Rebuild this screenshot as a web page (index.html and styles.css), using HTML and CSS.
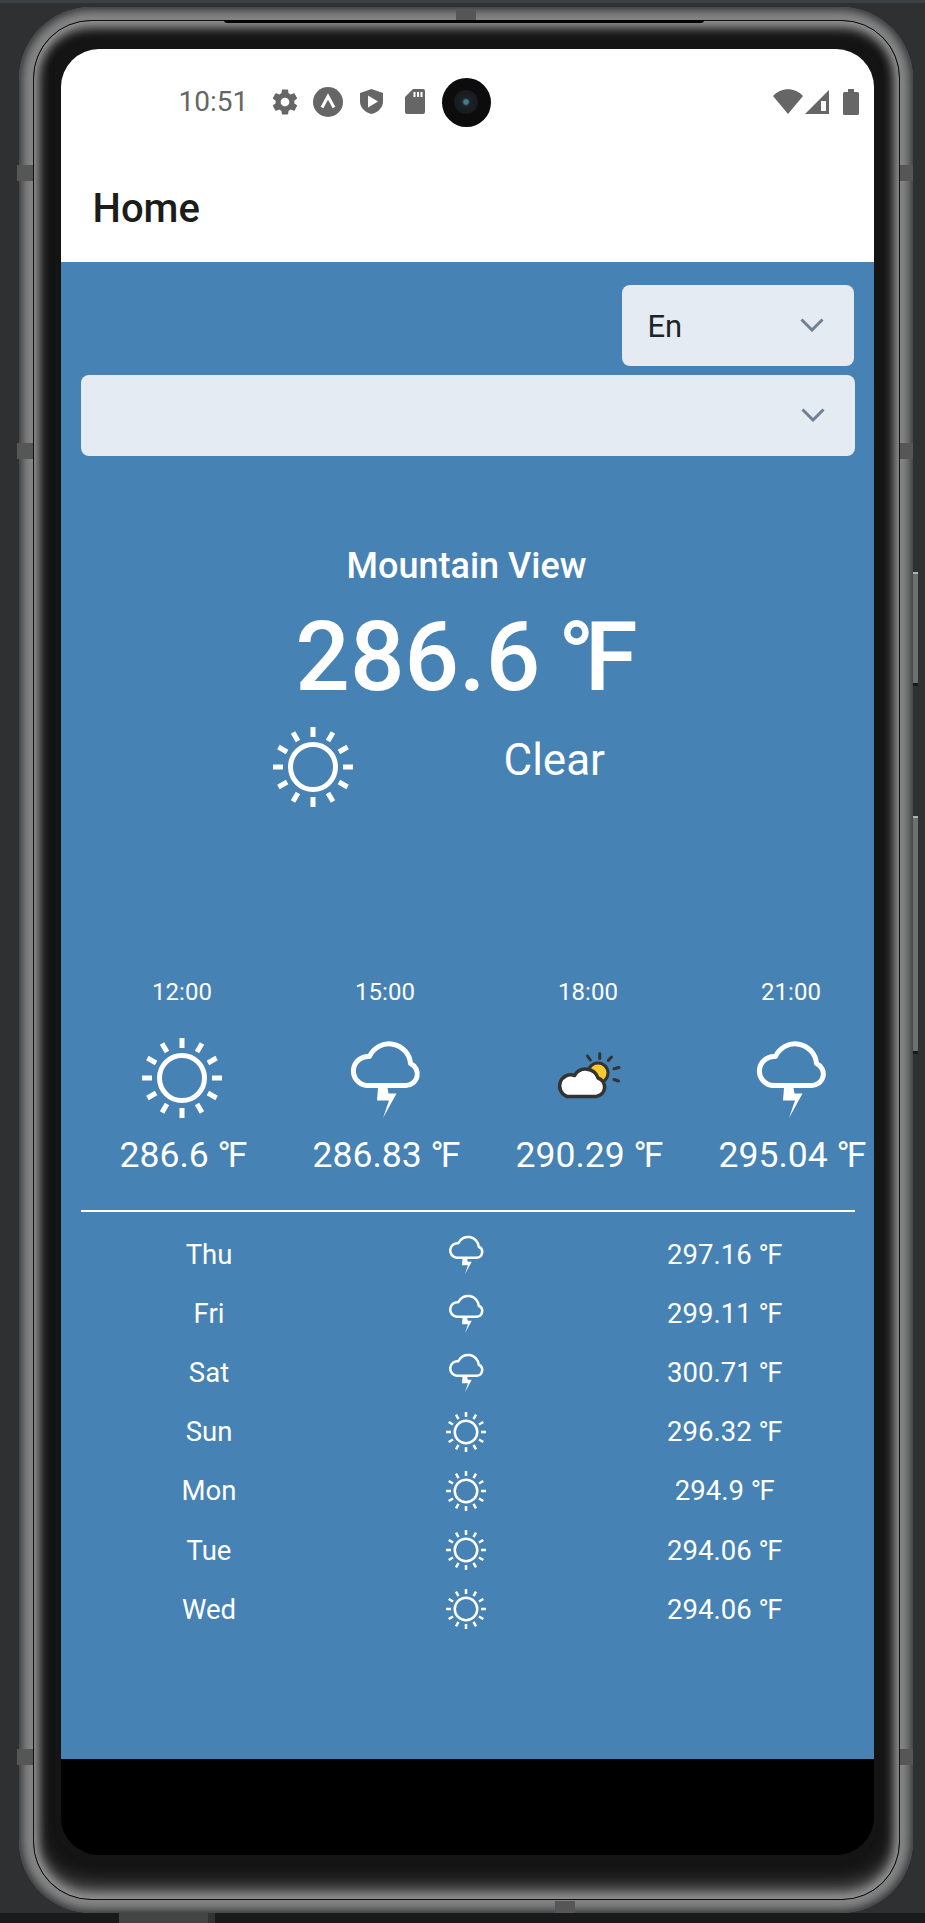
FILE: index.html
```html
<!DOCTYPE html>
<html lang="en">
<head>
<meta charset="utf-8">
<title>Home</title>
<link rel="stylesheet" href="styles.css">
</head>
<body>
<svg class="defs" width="0" height="0" aria-hidden="true">
  <defs>
    <g id="sun">
      <circle cx="40" cy="40" r="22.500" fill="none" stroke="#fff" stroke-width="5"/>
      <g stroke="#fff" stroke-width="5">
        <path d="M40 0v10M40 70v10M0 40h10M70 40h10"/>
        <path d="M20 5.400l5 8.700M55 65.900l5 8.700M5.400 20l8.700 5M65.900 55l8.700 5"/>
        <path d="M60 5.400l-5 8.700M25 65.900l-5 8.700M74.600 20l-8.700 5M14.100 55l-8.700 5"/>
      </g>
    </g>
    <g id="storm" transform="translate(-1.500 0)">
      <path d="M23 47.500H62A11.500 11.500 0 0 0 67 25.500A21.500 21.500 0 0 0 26 18.500A14.500 14.500 0 0 0 23 47.500Z" fill="none" stroke="#fff" stroke-width="5" stroke-linejoin="round"/>
      <polygon points="34.500,50 44,50 45,55.500 53,55.500 39.500,80 45.500,62.500 33.500,62.500" fill="#fff"/>
    </g>
    <g id="partly">
      <g stroke="#333" stroke-width="3" stroke-linecap="round">
        <path d="M51.700 15.500v5M39.500 18l2.800 4M63.500 19l-3.200 3.400M71 29.500l-5 1.200M70.500 43l-4.500-1.500"/>
      </g>
      <circle cx="50" cy="35" r="10" fill="#f7cb2d" stroke="#333" stroke-width="3"/>
      <path d="M19 58.500H48A9.500 9.500 0 0 0 50 40A13 13 0 0 0 26.500 37.500A10.500 10.500 0 0 0 19 58.500Z" fill="#fff" stroke="#333" stroke-width="3.500" stroke-linejoin="round"/>
    </g>
  </defs>
</svg>
<div class="strip-top"></div>
<div class="device">
  <span class="side-btn btn-top"></span>
  <span class="side-btn btn-bottom"></span>
  <span class="side-btn btn-l btn-a"></span>
  <span class="side-btn btn-l btn-b"></span>
  <span class="side-btn btn-l btn-c"></span>
  <span class="side-btn btn-r btn-a"></span>
  <span class="side-btn btn-r btn-b"></span>
  <span class="side-btn btn-r btn-c"></span>
  <span class="key key-power"></span>
  <span class="key key-volume"></span>
  <div class="bezel">
    <span class="notch"></span>
    <div class="screen">
      <span class="camera"><span class="lens"></span></span>
      <header class="chrome">
        <div class="status">
          <div class="status-left">
            <span class="clock">10:51</span>
            <svg class="si gear" viewBox="0 0 24 24"><path fill="#666" d="M19.400 13c.04-.33.06-.66.06-1s-.02-.67-.06-1l2.100-1.650c.2-.15.25-.42.12-.64l-2-3.460c-.12-.22-.39-.3-.61-.22l-2.490 1c-.52-.4-1.080-.73-1.690-.98l-.38-2.650A.49.49 0 0 0 14 2h-4c-.25 0-.46.18-.49.42l-.38 2.650c-.61.25-1.170.59-1.690.98l-2.490-1a.5.5 0 0 0-.61.22l-2 3.460c-.13.22-.07.49.12.64L4.560 11c-.04.33-.06.67-.06 1s.02.67.06 1l-2.100 1.650c-.2.15-.25.42-.12.64l2 3.460c.12.22.39.3.61.22l2.490-1c.52.4 1.080.73 1.690.98l.38 2.650c.03.24.24.42.49.42h4c.25 0 .46-.18.49-.42l.38-2.650c.61-.25 1.170-.59 1.690-.98l2.490 1c.23.09.49 0 .61-.22l2-3.460c.12-.22.07-.49-.12-.64L19.400 13zM12 15.500a3.500 3.500 0 1 1 0-7 3.500 3.500 0 0 1 0 7z"/></svg>
            <svg class="si expo" viewBox="0 0 30 30"><circle cx="15" cy="15" r="15" fill="#666"/><path d="M9 20.500L15 9.500L21 20.500" fill="none" stroke="#fff" stroke-width="3"/></svg>
            <svg class="si shield" viewBox="0 0 23 25"><path fill="#666" d="M11.500 0L23 4v8.500c0 6-4.800 10.800-11.500 12.500C4.800 23.300 0 18.500 0 12.500V4z"/><path fill="#fff" d="M8 6.500L18 12.500 8 18.500z"/></svg>
            <svg class="si sd" viewBox="0 0 20 25"><path fill="#666" d="M8 0H18a2 2 0 0 1 2 2V23a2 2 0 0 1-2 2H2a2 2 0 0 1-2-2V8z"/><path stroke="#fff" stroke-width="2" d="M9.500 3v5M13 3v5M16.500 3v5"/></svg>
          </div>
          <div class="status-right">
            <svg class="si wifi" viewBox="0 0 30 25"><path fill="#666" d="M15 25L0 7C8 -2 22 -2 30 7z"/></svg>
            <svg class="si signal" viewBox="0 0 24 24"><path fill="#666" d="M24 0V24H0z"/><path fill="#fff" d="M16 11h5v10h-5z"/></svg>
            <svg class="si battery" viewBox="0 0 16 26"><path fill="#666" d="M5 0h6v3h3.500a1.500 1.500 0 0 1 1.500 1.500V24.500A1.500 1.500 0 0 1 14.500 26H1.500A1.500 1.500 0 0 1 0 24.500V4.500A1.500 1.500 0 0 1 1.500 3H5z"/></svg>
          </div>
        </div>
        <h1 class="title">Home</h1>
      </header>
      <main class="content">
        <div class="select select-lang">
          <span class="select-value">En</span>
          <svg class="chevron" viewBox="0 0 24 14"><path d="M1.500 1.500L12 12 22.500 1.500" fill="none" stroke="#718096" stroke-width="3"/></svg>
        </div>
        <div class="select select-city">
          <svg class="chevron" viewBox="0 0 24 14"><path d="M1.500 1.500L12 12 22.500 1.500" fill="none" stroke="#718096" stroke-width="3"/></svg>
        </div>
        <section class="current">
          <div class="city">Mountain View</div>
          <div class="temp-now">286.6 <span class="unit">°F</span></div>
          <div class="condition">
            <svg class="icon-lg" viewBox="0 0 80 80"><use href="#sun"/></svg>
            <span class="condition-text">Clear</span>
          </div>
        </section>
        <section class="hours">
          <div class="hour"><span class="hour-time">12:00</span><svg class="icon-lg" viewBox="0 0 80 80"><use href="#sun"/></svg><span class="hour-temp">286.6 <span class="unit">°F</span></span></div>
          <div class="hour"><span class="hour-time">15:00</span><svg class="icon-lg" viewBox="0 0 80 80"><use href="#storm"/></svg><span class="hour-temp">286.83 <span class="unit">°F</span></span></div>
          <div class="hour"><span class="hour-time">18:00</span><svg class="icon-lg" viewBox="0 0 80 80"><use href="#partly"/></svg><span class="hour-temp">290.29 <span class="unit">°F</span></span></div>
          <div class="hour"><span class="hour-time">21:00</span><svg class="icon-lg" viewBox="0 0 80 80"><use href="#storm"/></svg><span class="hour-temp">295.04 <span class="unit">°F</span></span></div>
        </section>
        <section class="days">
          <div class="day"><span>Thu</span><svg class="icon-sm" viewBox="0 0 80 80"><use href="#storm"/></svg><span>297.16 <span class="unit">°F</span></span></div>
          <div class="day"><span>Fri</span><svg class="icon-sm" viewBox="0 0 80 80"><use href="#storm"/></svg><span>299.11 <span class="unit">°F</span></span></div>
          <div class="day"><span>Sat</span><svg class="icon-sm" viewBox="0 0 80 80"><use href="#storm"/></svg><span>300.71 <span class="unit">°F</span></span></div>
          <div class="day"><span>Sun</span><svg class="icon-sm" viewBox="0 0 80 80"><use href="#sun"/></svg><span>296.32 <span class="unit">°F</span></span></div>
          <div class="day"><span>Mon</span><svg class="icon-sm" viewBox="0 0 80 80"><use href="#sun"/></svg><span>294.9 <span class="unit">°F</span></span></div>
          <div class="day"><span>Tue</span><svg class="icon-sm" viewBox="0 0 80 80"><use href="#sun"/></svg><span>294.06 <span class="unit">°F</span></span></div>
          <div class="day"><span>Wed</span><svg class="icon-sm" viewBox="0 0 80 80"><use href="#sun"/></svg><span>294.06 <span class="unit">°F</span></span></div>
        </section>
      </main>
      <div class="nav-area"></div>
    </div>
  </div>
</div>
<div class="strip-bottom"><span class="strip-tab"></span><span class="strip-tab-edge"></span></div>
</body>
</html>
```
FILE: styles.css
```css
* { box-sizing: border-box; }
html, body { margin: 0; padding: 0; }
body {
  width: 925px;
  height: 1923px;
  overflow: hidden;
  background: #2e3032;
  font-family: Roboto, "Liberation Sans", sans-serif;
  color: #fff;
  display: flex;
  flex-direction: column;
}
.defs { position: absolute; }
.strip-top { height: 3px; background: #3b4045; flex: none; }
.device {
  position: relative;
  flex: none;
  width: 894px;
  height: 1906px;
  margin: 4px 0 0 19px;
  padding: 13px 13px 13px 14px;
  border-radius: 72px;
  background: #858585;
  box-shadow: inset 0 0 10px 3px #2e3032;
}
.side-btn { position: absolute; background: #565656; }
.btn-top { left: 437px; top: 2px; width: 20px; height: 11px; }
.btn-bottom { left: 536px; bottom: 0; width: 20px; height: 12px; }
.btn-l { left: -2px; width: 16px; height: 16px; }
.btn-r { right: 0; width: 14px; height: 16px; }
.btn-a { top: 158px; }
.btn-b { top: 436px; }
.btn-c { top: 1742px; }
.key {
  position: absolute;
  left: 894px;
  width: 5px;
  background: #6f6f6f;
  border-top: 2px solid #b0b0b0;
  border-bottom: 3px solid #191919;
}
.key-power { top: 565px; height: 114px; }
.key-volume { top: 809px; height: 238px; }
.bezel {
  position: relative;
  height: 1880px;
  padding: 29px 27px 43px 28px;
  border: 1.500px solid #101010;
  border-radius: 58px;
  background: #141414;
  box-shadow: inset 0 0 11px 4px #999, inset 0 -16px 22px -6px #777, inset 0 9px 14px -4px #777;
}
.notch {
  position: absolute;
  left: 190px;
  top: -1px;
  width: 480px;
  height: 3px;
  background: #050505;
  border-radius: 0 0 4px 4px;
}
.screen {
  position: relative;
  height: 100%;
  margin: -1.500px;
  border-radius: 38px;
  overflow: hidden;
  display: flex;
  flex-direction: column;
  background: #000;
}
.camera {
  position: absolute;
  left: 381px;
  top: 29px;
  width: 49px;
  height: 49px;
  border-radius: 50%;
  background: #0c0c0c;
  display: flex;
  align-items: center;
  justify-content: center;
}
.lens {
  width: 24px;
  height: 24px;
  border-radius: 50%;
  background: radial-gradient(circle, #3f7f8e 0 2px, #1c2228 4px, #171a1e 12px);
}
.chrome { flex: none; height: 213px; background: #fff; padding-top: 38px; }
.status { height: 30px; display: flex; align-items: center; justify-content: space-between; padding: 0 15px 0 118px; }
.status-left, .status-right { display: flex; align-items: center; }
.clock { font-size: 28px; color: #666; width: 91px; }
.si { display: block; flex: none; }
.gear { width: 30px; height: 30px; margin-right: 13px; }
.expo { width: 30px; height: 30px; margin-right: 17px; }
.shield { width: 23px; height: 25px; margin-right: 22px; }
.sd { width: 20px; height: 25px; }
.wifi { width: 30px; height: 25px; margin-right: 2px; }
.signal { width: 24px; height: 24px; margin-right: 14px; }
.battery { width: 16px; height: 26px; }
.title {
  margin: 67px 0 0 32px;
  font-size: 40px;
  line-height: 50px;
  font-weight: 500;
  color: #1c1c1c;
}
.content {
  flex: none;
  height: 1497px;
  background: #4682b4;
  padding: 23px 19px 0 20px;
  display: flex;
  flex-direction: column;
}
.select {
  height: 81px;
  border-radius: 8px;
  background: #e5ebf2;
  display: flex;
  align-items: center;
  justify-content: flex-end;
  padding-right: 30px;
}
.select-lang { width: 232px; margin-left: auto; margin-right: 1px; justify-content: space-between; padding-left: 26px; }
.select-city { margin-top: 9px; }
.select-value { font-size: 31px; padding-top: 3px; color: #1f2328; }
.chevron { width: 24px; height: 14px; }
.current { margin-top: 88px; padding-right: 2px; display: flex; flex-direction: column; align-items: center; }
.city { font-size: 36px; line-height: 44px; font-weight: 500; }
.temp-now { font-size: 96px; line-height: 112px; font-weight: 500; margin-top: 13px; }
.temp-now .unit { letter-spacing: -10px; margin-left: -6px; margin-right: 10px; }
.condition { width: 100%; display: grid; grid-template-columns: 1fr 1fr; margin-top: 14px; }
.condition .icon-lg { justify-self: center; margin-left: 78px; }
.condition-text { font-size: 44px; line-height: 52px; margin-left: 37px; padding-top: 7px; }
.icon-lg { display: block; width: 80px; height: 80px; flex: none; }
.icon-sm { display: block; width: 40px; height: 40px; flex: none; justify-self: center; }
.hours {
  margin-top: 170px;
  display: grid;
  grid-template-columns: repeat(4, 203px);
  padding-bottom: 33px;
  border-bottom: 2px solid #fff;
}
.hour { display: flex; flex-direction: column; align-items: center; white-space: nowrap; }
.hour-time { font-size: 24px; line-height: 30px; margin-bottom: 31px; }
.hour-temp { font-size: 35.500px; line-height: 44px; margin-top: 15px; }
.hour-temp .unit { letter-spacing: -3px; }
.days { display: grid; grid-auto-rows: 59.200px; padding-top: 13px; }
.day { display: grid; grid-template-columns: 257px 1fr 261px; align-items: center; justify-items: center; font-size: 27.500px; }
.day .unit { letter-spacing: -1.500px; }
.nav-area { flex: 1; background: #000; }
.strip-bottom { flex: none; height: 10px; background: #1a1a1a; display: flex; padding-left: 119px; }
.strip-tab { width: 89px; background: #444; }
.strip-tab-edge { width: 7px; background: #333; }
```
